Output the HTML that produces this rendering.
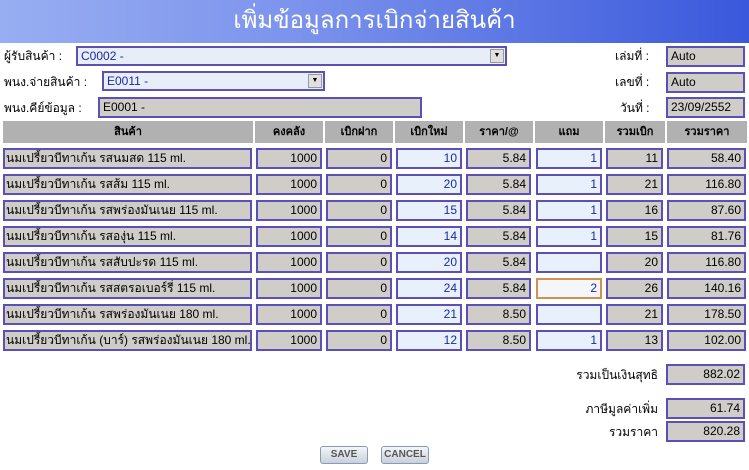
<!DOCTYPE html>
<html><head><meta charset="utf-8"><style>
*{margin:0;padding:0;box-sizing:border-box}
body{width:749px;height:470px;background:#fff;font-family:"Liberation Sans","DejaVu Sans",sans-serif;font-size:12px;color:#000;position:relative;overflow:hidden}
.hdr{position:absolute;left:0;top:0;width:749px;height:43px;background:linear-gradient(90deg,#98aef2 0%,#7b93ec 40%,#3a58dc 100%);color:#fff;font-size:24px;text-align:center;line-height:42px}
.lbl{position:absolute;font-size:12px;line-height:20px}
.box{position:absolute;border:2px solid #5a50b8;background:#d0cdc8;height:21px;line-height:17px;padding:0 3px;font-size:12px;white-space:nowrap;overflow:hidden}
.ed{background:#e8f0fc;color:#1a2aa0}
.r{text-align:right}
.th{position:absolute;top:121px;height:22px;background:#b1b1b1;color:#000;font-weight:bold;text-align:center;line-height:22px;font-size:11px}
.sel{position:absolute;border:2px solid #5a50b8;background:#e8eef8;height:20px;color:#1a2aa0;line-height:16px;padding:0 3px}
.dd{position:absolute;right:1px;top:1px;width:14px;height:14px;background:#e0e0e0;border:1px solid #999;font-size:7px;line-height:12px;text-align:center;color:#000}
.btn{position:absolute;top:446px;height:18px;border:1px solid #8a9ab0;border-radius:3px;background:linear-gradient(#f4f6f8,#c8d0da);font-size:10px;font-weight:bold;color:#555;text-align:center;line-height:16px}
</style></head><body>
<div class="hdr">เพิ่มข้อมูลการเบิกจ่ายสินค้า</div>

<div class="lbl" style="left:4px;top:46px">ผู้รับสินค้า :</div>
<div class="sel" style="left:76px;top:46px;width:431px">C0002 -<div class="dd">▼</div></div>
<div class="lbl" style="left:615px;top:46px">เล่มที่ :</div>
<div class="box" style="left:666px;top:46px;width:79px">Auto</div>

<div class="lbl" style="left:4px;top:72px">พนง.จ่ายสินค้า :</div>
<div class="sel" style="left:102px;top:71px;width:223px">E0011 -<div class="dd">▼</div></div>
<div class="lbl" style="left:615px;top:72px">เลขที่ :</div>
<div class="box" style="left:666px;top:72px;width:79px">Auto</div>

<div class="lbl" style="left:4px;top:98px">พนง.คีย์ข้อมูล :</div>
<div class="box" style="left:98px;top:97px;width:324px">E0001 -</div>
<div class="lbl" style="left:620px;top:98px">วันที่ :</div>
<div class="box" style="left:666px;top:97px;width:79px">23/09/2552</div>

<div class="th" style="left:3px;width:250px">สินค้า</div>
<div class="th" style="left:255px;width:68px">คงคลัง</div>
<div class="th" style="left:325px;width:68px">เบิกฝาก</div>
<div class="th" style="left:395px;width:68px">เบิกใหม่</div>
<div class="th" style="left:465px;width:68px">ราคา/@</div>
<div class="th" style="left:535px;width:68px">แถม</div>
<div class="th" style="left:605px;width:60px">รวมเบิก</div>
<div class="th" style="left:667px;width:80px">รวมราคา</div>

<div id="rows"></div>
<script>
var d=[["นมเปรี้ยวบีทาเก้น รสนมสด  115  ml.","10","1","11","58.40"],
["นมเปรี้ยวบีทาเก้น รสส้ม 115  ml.","20","1","21","116.80"],
["นมเปรี้ยวบีทาเก้น รสพร่องมันเนย 115  ml.","15","1","16","87.60"],
["นมเปรี้ยวบีทาเก้น รสองุ่น 115  ml.","14","1","15","81.76"],
["นมเปรี้ยวบีทาเก้น รสสับปะรด 115  ml.","20","","20","116.80"],
["นมเปรี้ยวบีทาเก้น รสสตรอเบอร์รี่ 115  ml.","24","2","26","140.16"],
["นมเปรี้ยวบีทาเก้น รสพร่องมันเนย 180  ml.","21","","21","178.50"],
["นมเปรี้ยวบีทาเก้น (บาร์) รสพร่องมันเนย 180 ml.","12","1","13","102.00"]];
var pr=["5.84","5.84","5.84","5.84","5.84","5.84","8.50","8.50"];
var h="";
for(var i=0;i<8;i++){var t=148+i*26;var r=d[i];
h+='<div class="box" style="left:3px;top:'+t+'px;width:249px;padding-left:1px">'+r[0]+'</div>';
h+='<div class="box r" style="left:256px;top:'+t+'px;width:66px">1000</div>';
h+='<div class="box r" style="left:326px;top:'+t+'px;width:66px">0</div>';
h+='<div class="box ed r" style="left:396px;top:'+t+'px;width:66px">'+r[1]+'</div>';
h+='<div class="box r" style="left:466px;top:'+t+'px;width:65px">'+pr[i]+'</div>';
h+='<div class="box ed r" style="left:536px;top:'+t+'px;width:66px;'+(i==5?'border-color:#d09050;background:#f4f6fa':'')+'">'+r[2]+'</div>';
h+='<div class="box r" style="left:606px;top:'+t+'px;width:57px">'+r[3]+'</div>';
h+='<div class="box r" style="left:667px;top:'+t+'px;width:79px">'+r[4]+'</div>';}
document.getElementById("rows").innerHTML=h;
</script>

<div class="lbl" style="left:552px;top:365px;width:106px;text-align:right">รวมเป็นเงินสุทธิ</div>
<div class="box r" style="left:666px;top:364px;width:79px">882.02</div>
<div class="lbl" style="left:552px;top:399px;width:106px;text-align:right">ภาษีมูลค่าเพิ่ม</div>
<div class="box r" style="left:666px;top:398px;width:79px">61.74</div>
<div class="lbl" style="left:552px;top:422px;width:106px;text-align:right">รวมราคา</div>
<div class="box r" style="left:666px;top:421px;width:79px">820.28</div>

<div class="btn" style="left:320px;width:48px">SAVE</div>
<div class="btn" style="left:381px;width:48px">CANCEL</div>
</body></html>
